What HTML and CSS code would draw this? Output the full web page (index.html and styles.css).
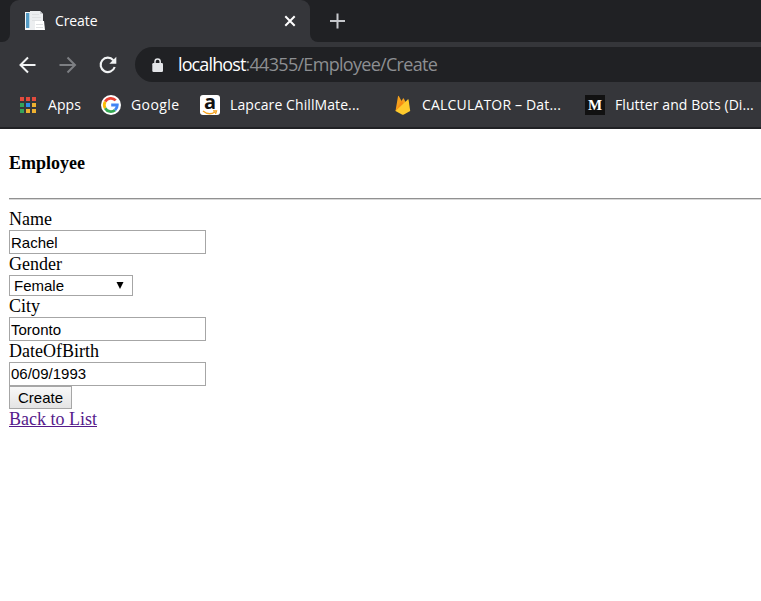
FILE: index.html
```html
<!DOCTYPE html>
<html lang="en">
<head>
<meta charset="utf-8">
<title>Create</title>
<link rel="stylesheet" href="styles.css">
</head>
<body>
<header class="browser">
  <div class="tabs">
    <div class="tab-edge"></div>
    <div class="tab">
      <svg class="favicon" width="20" height="20" viewBox="0 0 20 20"><path fill="#f5f6f7" d="M0 1h6v18H0z"/><path fill="#559bc4" d="M1 2h3v15H1z"/><path fill="#b8d9e9" d="M4 2h1v15H4z"/><path fill="#eceef0" d="M5 0h10l3 3v16H5z"/><path fill="#fff" d="M10 10h9l1 9H10z"/><path stroke="#dfe1e3" d="M7 3.500h7M7 6.500h9M7 9.500h9M11 13.500h7M11 16.500h7"/><path fill="#c9ccd0" d="M15 0v3h3z"/></svg>
      <span class="tab-title">Create</span>
      <svg class="close" width="12" height="12" viewBox="0 0 12 12"><path d="M1.300 1.300l9.400 9.400M10.700 1.300l-9.400 9.400" stroke="#fff" stroke-width="2"/></svg>
    </div>
    <div class="tab-foot"></div>
    <svg class="plus" width="16" height="16" viewBox="0 0 16 16"><path d="M7.500 .5v15M0 8h15" stroke="#c6c8cc" stroke-width="2"/></svg>
  </div>
  <nav class="toolbar">
    <svg class="nav-icon" width="20" height="20" viewBox="0 0 20 20"><path d="M17.500 10H3M10 2.500L2.500 10l7.500 7.500" fill="none" stroke="#f1f3f4" stroke-width="2"/></svg>
    <svg class="nav-icon" width="20" height="20" viewBox="0 0 20 20"><path d="M1.500 10H16M9.500 2.500L17 10l-7.500 7.500" fill="none" stroke="#7d7f83" stroke-width="2"/></svg>
    <svg class="nav-icon" width="20" height="20" viewBox="0 0 20 20"><path d="M15.300 5.200A7.200 7.200 0 1 0 16.700 12" fill="none" stroke="#f1f3f4" stroke-width="2.100"/><path d="M18.300 1.800v7h-7z" fill="#f1f3f4"/></svg>
    <div class="address">
      <svg width="12" height="16" viewBox="0 0 12 16"><path d="M3 7V4.500a2.600 2.600 0 0 1 5.200 0V7" fill="none" stroke="#e3e5e8" stroke-width="1.500"/><rect x=".3" y="6" width="10.700" height="9" rx="1.200" fill="#e3e5e8"/></svg>
      <span class="url"><span class="host">localhost</span><span class="path">:44355/Employee/Create</span></span>
    </div>
  </nav>
  <div class="bookmarks">
    <div class="bookmark apps">
      <svg width="18" height="18" viewBox="0 0 18 18"><path fill="#e34b3d" d="M0 1h4v4H0zM6 1h4v4H6zM12 1h4v4h-4z"/><path fill="#35a35a" d="M0 7h4v4H0zM0 13h4v4H0z"/><path fill="#2c8ceb" d="M6 7h4v4H6z"/><path fill="#eeb130" d="M12 7h4v4h-4zM6 13h4v4H6zM12 13h4v4h-4z"/></svg>
      <span class="label">Apps</span>
    </div>
    <div class="bookmark google">
      <svg width="20" height="20" viewBox="0 0 20 20"><circle cx="10" cy="10" r="10" fill="#fff"/><g fill="none" stroke-width="2.800"><path d="M4.200 6.700A6.500 6.500 0 0 1 14.700 5.400" stroke="#ea4335"/><path d="M4.200 6.700a6.500 6.500 0 0 0 0 6.600" stroke="#fbbc05"/><path d="M4.200 13.300a6.500 6.500 0 0 0 9.800 1.800" stroke="#34a853"/><path d="M14 15.100A6.500 6.500 0 0 0 16.300 10H10.200" stroke="#4285f4"/></g></svg>
      <span class="label google-label">Google</span>
    </div>
    <div class="bookmark lapcare">
      <span class="amazon"><b>a</b><svg width="16" height="5" viewBox="0 0 16 5"><path d="M1 1q6 5 12 1M11 .8h3.500L13.500 4" fill="none" stroke="#f5a11c" stroke-width="1.300"/></svg></span>
      <span class="label">Lapcare ChillMate...</span>
    </div>
    <div class="bookmark calculator">
      <svg width="16" height="20" viewBox="0 0 16 20"><path fill="#f4a01c" d="M.5 16L3 1.200q.4-.8.900 0L6.500 6 8 3.400q.4-.5.800 0L15 16z"/><path fill="#f78b15" d="M.5 16L6.500 5.500l3 5z"/><path fill="#ffcb2d" d="M.5 16L12.800 4.500q.6-.4.800.3L15.200 16l-6.300 3.500q-1 .5-2 0z"/></svg>
      <span class="label calc-label">CALCULATOR – Dat...</span>
    </div>
    <div class="bookmark flutter">
      <span class="medium">M</span>
      <span class="label">Flutter and Bots (Di...</span>
    </div>
  </div>
</header>
<main>
  <h4>Employee</h4>
  <hr>
  <form>
    <label for="name">Name</label>
    <input id="name" type="text" value="Rachel">
    <label for="gender">Gender</label>
    <div class="select" id="gender"><span>Female</span><svg width="8" height="8" viewBox="0 0 8 8"><path d="M.5 0h7L4 7z"/></svg></div>
    <label for="city">City</label>
    <input id="city" type="text" value="Toronto">
    <label for="dob">DateOfBirth</label>
    <input id="dob" type="text" value="06/09/1993">
    <button type="button">Create</button>
  </form>
  <a href="#">Back to List</a>
</main>
</body>
</html>
```
FILE: styles.css
```css
* { box-sizing: border-box; }
body { margin: 0; background: #fff; overflow: hidden; }
svg { display: block; flex: none; }
.browser {
  height: 129px;
  background: #35363a;
  border-bottom: 2px solid #202124;
  color: #fff;
  font-family: "Open Sans", "Noto Sans", sans-serif;
}
.tabs { display: flex; height: 42px; background: #35363a; }
.tab-edge { width: 10px; background: #202124; border-bottom-right-radius: 8px; }
.tab {
  display: flex;
  align-items: center;
  width: 300px;
  padding-left: 15px;
  background: linear-gradient(#202124, #202124) top / 100% 10px no-repeat;
  position: relative;
}
.tab::before {
  content: "";
  position: absolute;
  inset: 0;
  background: #35363a;
  border-radius: 9px 9px 0 0;
}
.tab > * { position: relative; }
.tab-title { width: 239px; padding: 0 0 2px 10px; font-size: 14px; letter-spacing: -.1px; }
.tab-foot { flex: 1; background: #202124; border-bottom-left-radius: 8px; }
.plus { position: absolute; left: 330px; top: 13px; }
.toolbar { display: flex; align-items: center; height: 45px; padding-left: 18px; }
.nav-icon { margin-right: 20px; }
.address {
  display: flex;
  align-items: center;
  flex: 1;
  height: 35px;
  margin-left: -3px;
  padding-left: 17px;
  background: #202124;
  border-radius: 18px 0 0 18px;
}
.url { margin-left: 14px; padding-bottom: 1px; font-size: 18px; white-space: nowrap; }
.host { letter-spacing: -.88px; }
.path { color: #8d8f92; letter-spacing: -.7px; }
.bookmarks { display: flex; height: 36px; padding-left: 20px; font-size: 14px; white-space: nowrap; }
.bookmark { display: flex; align-items: center; flex: none; }
.label { padding-bottom: 2px; letter-spacing: .09px; }
.google-label { letter-spacing: .4px; }
.calc-label { letter-spacing: .18px; }
.apps { width: 81px; gap: 10px; }
.google { width: 99px; gap: 10px; }
.lapcare { width: 195px; gap: 10px; }
.calculator { width: 190px; gap: 11px; }
.flutter { gap: 10px; }
.amazon {
  width: 20px;
  height: 20px;
  background: #fff;
  border-radius: 3px;
  color: #111;
  text-align: center;
}
.amazon b { display: block; height: 15px; font-size: 20px; line-height: 13px; }
.amazon svg { margin: 0 auto; }
.medium {
  width: 20px;
  height: 20px;
  background: #111;
  font: bold 15px/21px "Liberation Serif", serif;
  text-align: center;
}
main { padding: 24px 0 0 9px; font: 18px/21px "Liberation Serif", serif; color: #000; }
h4 { margin: 0; font-size: 18px; line-height: 21px; }
hr { height: 2px; margin: 24px 0 9px; border: 0; border-top: 1px solid #919191; border-bottom: 1px solid #d8d8d8; }
label { display: block; height: 21px; }
input, .select, button {
  display: block;
  border: 1px solid #a6a6a6;
  border-radius: 0;
  background: #fff;
  color: #000;
  font: 15px "Liberation Sans", sans-serif;
}
input { width: 197px; height: 24px; padding: 2px 1px 1px; }
#dob { padding: 1px 1px 3px; }
.select { display: flex; align-items: center; justify-content: space-between; width: 124px; height: 21px; padding: 0 8px 0 4px; }
button { width: 63px; height: 23px; padding: 0; background: linear-gradient(#f8f8f8, #e4e4e4); }
a { color: #551a8b; }
```
